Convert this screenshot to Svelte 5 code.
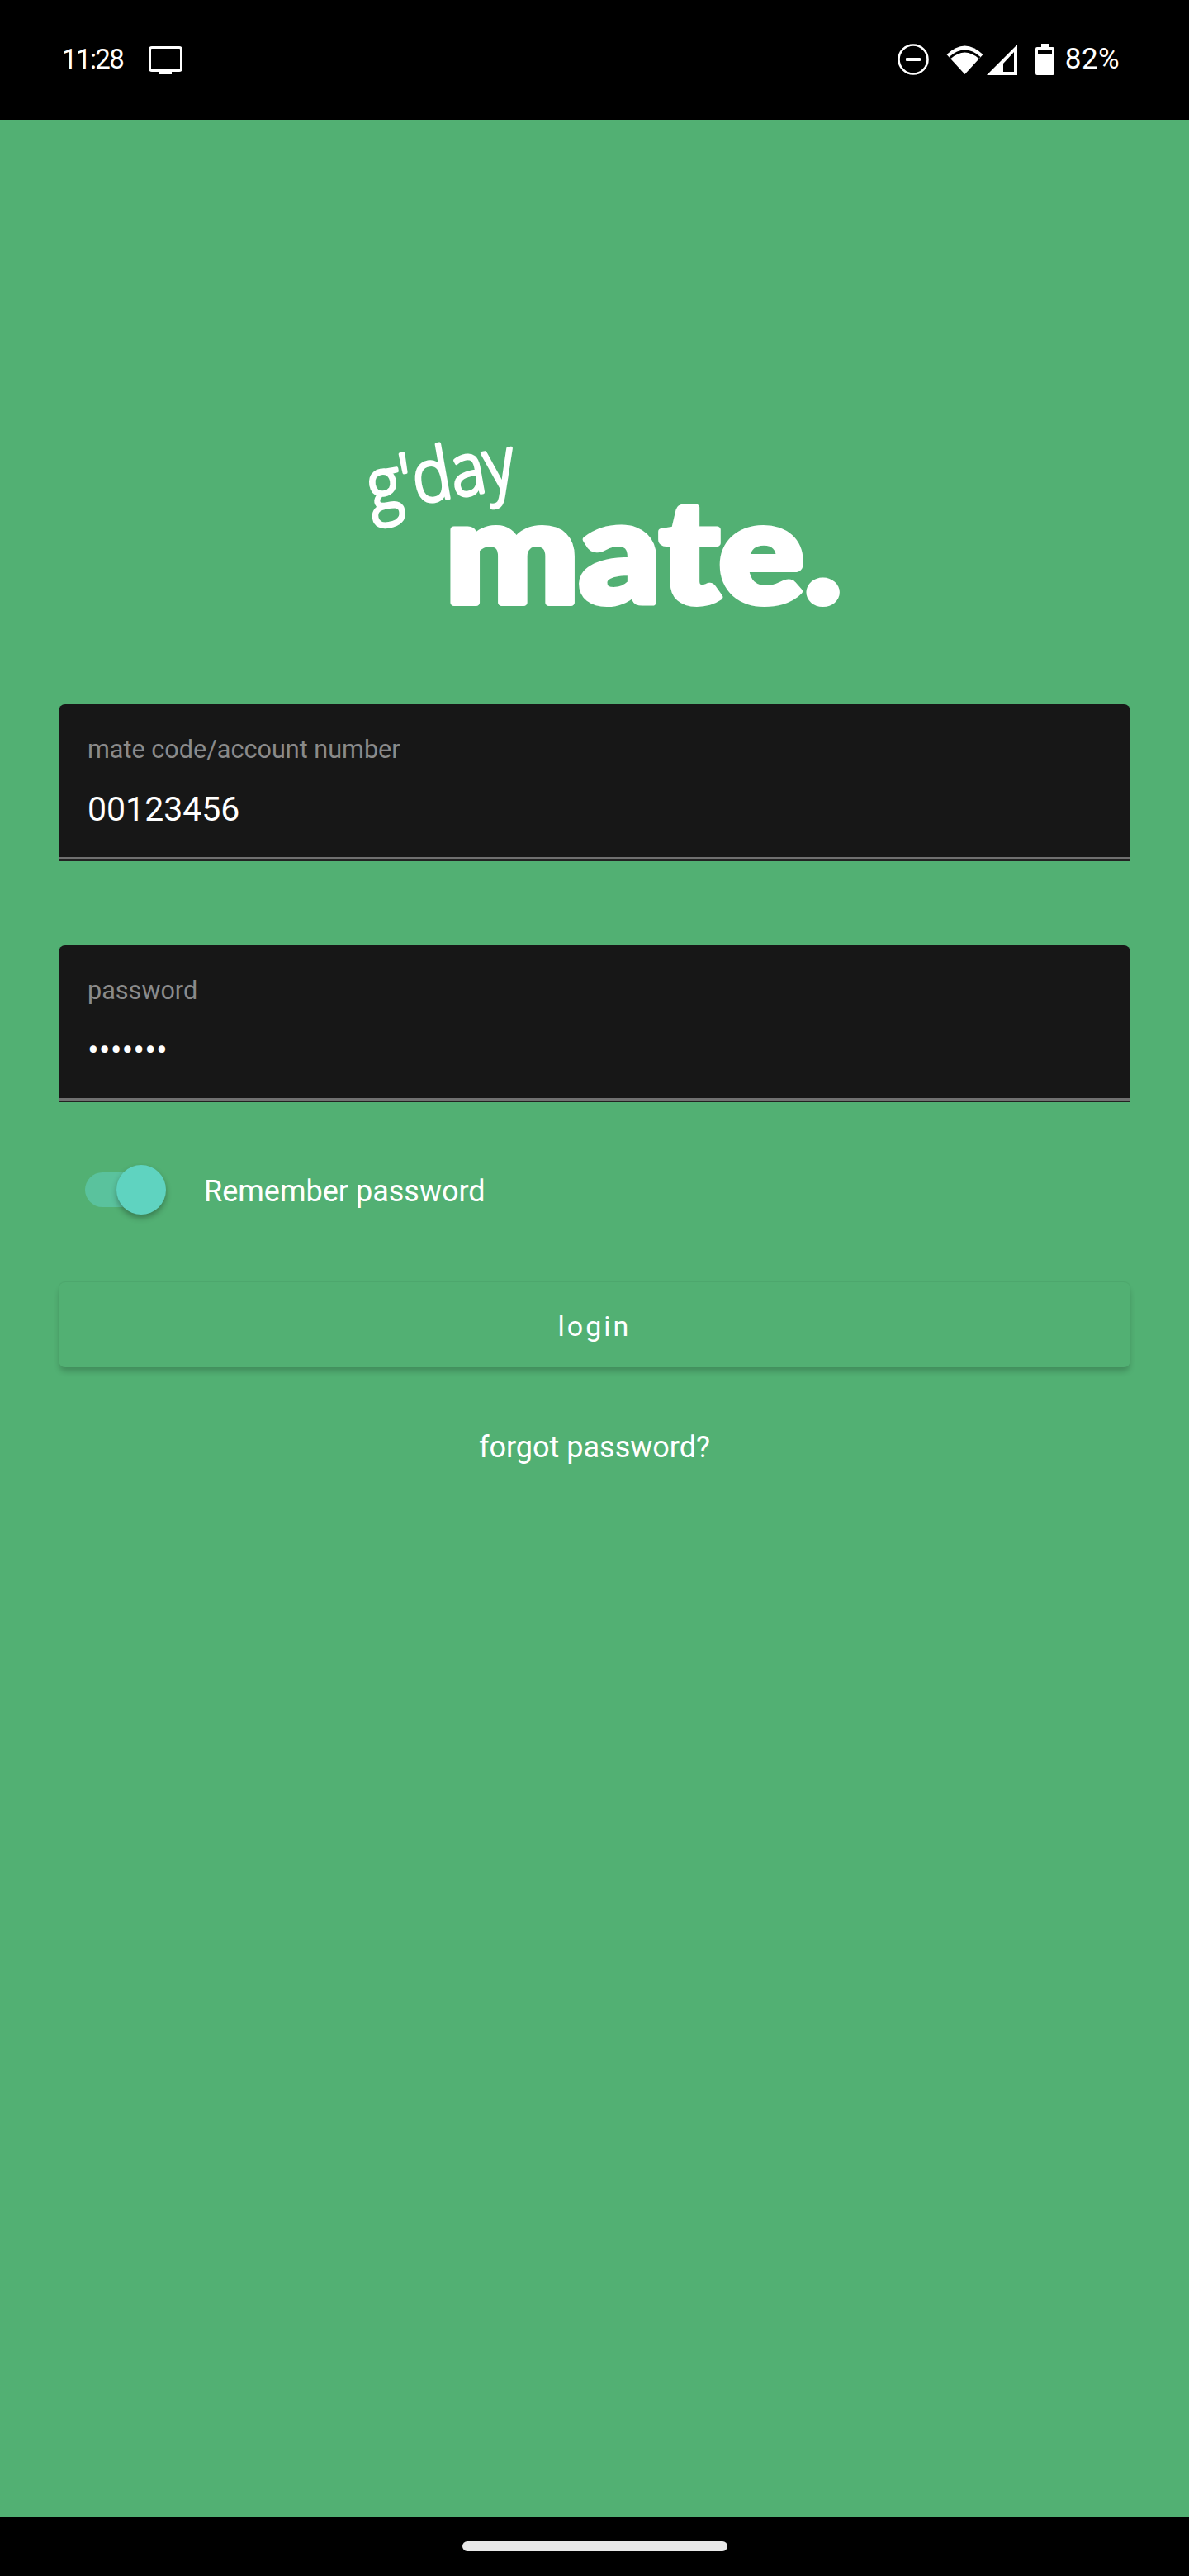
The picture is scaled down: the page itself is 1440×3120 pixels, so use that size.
<script lang="ts">
  let remember = $state(true);
  let code = "00123456";
  let password = "•••••••";
</script>

<div class="screen">
  <header class="status">
    <div class="status-left">
      <span class="time">11:28</span>
      <svg class="tv" width="42" height="36" viewBox="0 0 42 36" aria-hidden="true">
        <rect x="1.5" y="1.5" width="38" height="28" rx="2.5" fill="none" stroke="#fff" stroke-width="3" />
        <rect x="13" y="30" width="15" height="4" fill="#fff" />
      </svg>
    </div>
    <div class="status-right">
      <svg class="dnd" width="38" height="38" viewBox="0 0 38 38" aria-hidden="true">
        <circle cx="19" cy="19" r="17.5" fill="none" stroke="#fff" stroke-width="2.6" />
        <rect x="10" y="17" width="18" height="4" rx="1" fill="#fff" />
      </svg>
      <svg class="wifi" width="45" height="37" viewBox="0 0 45 37" aria-hidden="true">
        <path d="M0.5 13 Q22.5 -8 44.5 13 L22.5 37 Z" fill="#fff" />
        <path d="M4.5 17 Q22.5 1 40.5 17" fill="none" stroke="#000" stroke-width="3" />
      </svg>
      <svg class="signal" width="37" height="37" viewBox="0 0 37 37" aria-hidden="true">
        <path d="M0 37 L37 0 V37 Z M20 33 H33 V9 L20 23 Z" fill="#fff" fill-rule="evenodd" />
      </svg>
      <svg class="battery" width="23" height="38" viewBox="0 0 23 38" aria-hidden="true">
        <path d="M7 0 H17 V4 H21 Q23 4 23 6 V36 Q23 38 21 38 H2 Q0 38 0 36 V6 Q0 4 2 4 H7 Z M3 7 V12 H20 V7 Z" fill="#fff" fill-rule="evenodd" />
      </svg>
      <span class="percent">82%</span>
    </div>
  </header>

  <main class="content">
    <div class="logo">
      <svg width="620" height="250" viewBox="0 0 620 250" role="img" aria-label="g'day mate.">
        <text class="logo-gday" transform="translate(30 110) rotate(-10) scale(0.89 1)">g'day</text>
        <text class="logo-mate" transform="translate(119 220) scale(1.12 1)">mate.</text>
      </svg>
    </div>

    <label class="field">
      <span class="field-label">mate code/account number</span>
      <span class="field-value">{code}</span>
    </label>

    <label class="field field-password">
      <span class="field-label">password</span>
      <span class="field-value">{password}</span>
    </label>

    <div class="remember">
      <button class="switch" class:on={remember} aria-label="Remember password" onclick={() => (remember = !remember)}>
        <span class="thumb"></span>
      </button>
      <span class="remember-label">Remember password</span>
    </div>

    <button class="login">login</button>
    <a class="forgot" href="#forgot">forgot password?</a>
  </main>

  <footer class="nav">
    <span class="pill"></span>
  </footer>
</div>

<style>
  :global(body) {
    margin: 0;
    background: #000;
  }

  .screen {
    width: 1440px;
    height: 3120px;
    display: flex;
    flex-direction: column;
    font-family: Roboto, "Liberation Sans", sans-serif;
    color: #fff;
  }

  .status {
    height: 145px;
    flex: none;
    background: #000;
    display: flex;
    justify-content: space-between;
    align-items: flex-start;
    box-sizing: border-box;
    padding: 0 84px 0 75px;
  }

  .status-left,
  .status-right {
    display: flex;
    align-items: flex-start;
  }

  .time {
    font-size: 33px;
    line-height: 40px;
    margin-top: 52px;
    letter-spacing: -1.6px;
  }

  .percent {
    font-size: 35px;
    line-height: 40px;
    margin: 52px 0 0 13px;
    letter-spacing: 0.4px;
  }

  .tv {
    margin: 56px 0 0 31px;
  }

  .dnd {
    margin-top: 53px;
  }

  .wifi {
    margin: 53px 0 0 21px;
  }

  .signal {
    margin: 54px 0 0 4px;
  }

  .battery {
    margin: 53px 0 0 22px;
  }

  .content {
    flex: 1;
    background: #52b073;
    box-sizing: border-box;
    padding: 0 71px;
    display: flex;
    flex-direction: column;
  }

  .logo {
    margin: 365px 0 93px 349px;
    height: 250px;
    flex: none;
  }

  .logo svg {
    display: block;
    overflow: visible;
  }

  .logo-gday {
    font-family: "Open Sans", sans-serif;
    font-size: 88px;
    font-weight: 300;
    fill: #fff;
    stroke: #fff;
    stroke-width: 4px;
    stroke-linejoin: round;
  }

  .logo-mate {
    font-family: Lato, sans-serif;
    font-size: 172px;
    font-weight: 900;
    fill: #fff;
    stroke: #fff;
    stroke-width: 8px;
    stroke-linejoin: round;
  }

  .field {
    display: flex;
    flex-direction: column;
    height: 190px;
    flex: none;
    box-sizing: border-box;
    padding: 37px 35px 0;
    background: linear-gradient(#171717, #171717 185px, #707070 185px, #707070 188px, #222 188px);
    border-radius: 8px 8px 0 0;
  }

  .field-password {
    margin-top: 102px;
  }

  .field-label {
    font-size: 30.6px;
    line-height: 36px;
    color: #8a8a8a;
  }

  .field-value {
    margin-top: 29px;
    font-size: 41px;
    line-height: 50px;
    color: #fff;
  }

  .remember {
    margin-top: 76px;
    height: 60px;
    display: flex;
    align-items: center;
    padding-left: 32px;
  }

  .switch {
    position: relative;
    width: 87px;
    height: 42px;
    padding: 0;
    border: 0;
    border-radius: 21px;
    background: #5ac29d;
  }

  .thumb {
    position: absolute;
    left: 38px;
    top: -9px;
    width: 60px;
    height: 60px;
    border-radius: 50%;
    background: #5fd3c0;
    box-shadow: 0 4px 7px rgba(0, 0, 0, 0.3);
  }

  .remember-label {
    margin: 3px 0 0 57px;
    font-size: 36px;
    line-height: 44px;
  }

  .login {
    margin-top: 82px;
    height: 103px;
    flex: none;
    border: 0;
    border-radius: 8px;
    background: #52b073;
    color: #fff;
    font-family: inherit;
    font-size: 34px;
    padding-top: 4px;
    letter-spacing: 3px;
    box-shadow: 0 6px 7px -1px rgba(0, 0, 0, 0.2), 0 -1px 1px rgba(0, 0, 0, 0.06);
  }

  .forgot {
    margin-top: 75px;
    text-align: center;
    font-size: 36px;
    line-height: 44px;
    color: #fff;
    text-decoration: none;
  }

  .nav {
    height: 71px;
    flex: none;
    background: #000;
    display: flex;
    justify-content: center;
    padding-top: 29px;
    box-sizing: border-box;
  }

  .pill {
    width: 321px;
    height: 12px;
    border-radius: 6px;
    background: #e8e8e8;
  }
</style>
